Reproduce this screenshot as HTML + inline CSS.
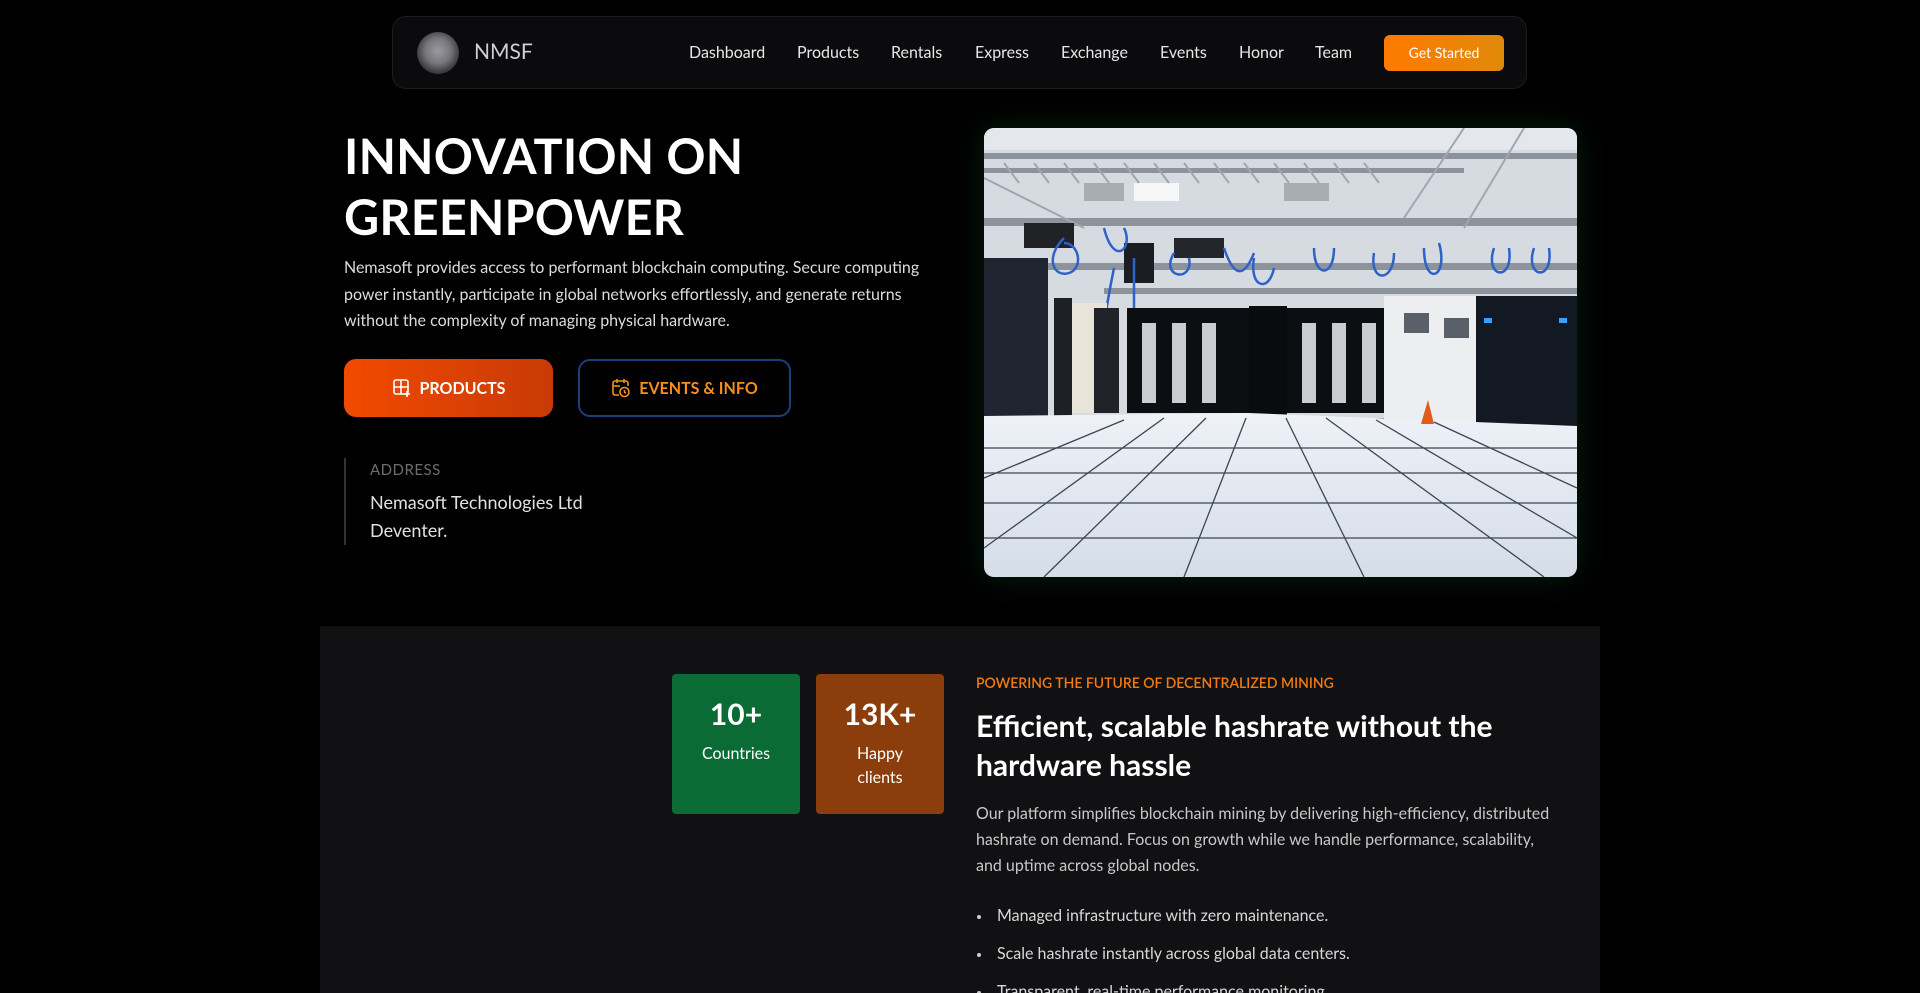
<!DOCTYPE html>
<html><head><meta charset="utf-8"><style>
*{box-sizing:border-box;margin:0;padding:0}
html{width:1920px;height:993px;overflow:hidden;background:#000}
body{width:1920px;height:993px;overflow:hidden;background:#000;font-family:"Lato","Liberation Sans",sans-serif;color:#fff;position:relative}
.nav{position:absolute;left:392px;top:16px;width:1135px;height:73px;background:#0b0b0d;border:1px solid #1d1d20;border-radius:14px}
.logo{position:absolute;left:24px;top:15px;width:42px;height:42px;border-radius:50%;background:radial-gradient(circle at 50% 45%,#9a9aa0 0,#77777d 40%,#3a3a3e 70%,#2a2a2d 100%)}
.brand{position:absolute;left:81px;top:22px;font-size:21px;color:#cfcfd2}
.links{position:absolute;left:296px;top:26px;font-size:16px;color:#e6e6e6;white-space:nowrap}
.links span{position:absolute}
.gs{position:absolute;left:991px;top:18px;width:120px;height:36px;border-radius:6px;background:linear-gradient(90deg,#ff7a00,#e08a0a);font-size:14px;text-align:center;line-height:36px;color:#fff}
h1{position:absolute;left:344px;top:126px;font-size:48.5px;line-height:61px;font-weight:700;letter-spacing:0.2px}
.lead{position:absolute;left:344px;top:255px;width:600px;font-size:16px;line-height:26.5px;color:#dcdcdc}
.btn{position:absolute;top:359px;height:58px;border-radius:12px;font-weight:700;font-size:16px;display:flex;align-items:center;justify-content:center;gap:8px}
.b1{left:344px;width:209px;background:linear-gradient(90deg,#f24a00,#c83a06);color:#fff}
.b2{left:578px;width:213px;border:2px solid #1d3f7a;color:#f4901e}
.addr{position:absolute;left:344px;top:458px;height:87px;border-left:2px solid #333;padding-left:24px}
.addr .l{font-size:15px;color:#6d6d6d;letter-spacing:.5px;margin-top:3px}
.addr .v{font-size:18px;line-height:28px;color:#e0e0e0;margin-top:9px}
.img{position:absolute;left:984px;top:128px;width:593px;height:449px;border-radius:10px;overflow:hidden;box-shadow:0 0 30px rgba(20,90,40,.35)}
.sec{position:absolute;left:320px;top:626px;width:1280px;height:367px;background:#111113}
.card{position:absolute;top:48px;width:128px;height:140px;border-radius:4px;text-align:center}
.card b{display:block;font-size:30px;margin-top:22px;font-weight:700}
.card p{font-size:16px;line-height:24px;margin-top:10px}
.eb{position:absolute;left:656px;top:48px;font-size:14px;color:#f07a14;font-weight:600}
h2{position:absolute;left:656px;top:81px;font-size:30px;line-height:39px;font-weight:700;width:560px}
.p2{position:absolute;left:656px;top:175px;width:580px;font-size:16px;line-height:26px;color:#c8c8c8}
ul{position:absolute;left:677px;top:280px;font-size:16px;color:#d8d8d8;list-style:none}
li{height:38px;position:relative;padding-left:0}
li:before{content:"";position:absolute;left:-20px;top:9px;width:4px;height:4px;border-radius:50%;background:#ccc}
</style></head><body>
<div class="nav"><div class="logo"></div><div class="brand">NMSF</div>
<div class="links"><span style="left:0">Dashboard</span><span style="left:108px">Products</span><span style="left:202px">Rentals</span><span style="left:286px">Express</span><span style="left:372px">Exchange</span><span style="left:471px">Events</span><span style="left:550px">Honor</span><span style="left:626px">Team</span></div>
<div class="gs">Get Started</div></div>
<h1>INNOVATION ON<br>GREENPOWER</h1>
<div class="lead">Nemasoft provides access to performant blockchain computing. Secure computing power instantly, participate in global networks effortlessly, and generate returns without the complexity of managing physical hardware.</div>
<div class="btn b1"><svg width="20" height="20" viewBox="0 0 20 20" fill="none" stroke="#fff" stroke-width="1.6"><rect x="2" y="2" width="14" height="14" rx="2"/><path d="M9 2v14M2 9h14M15 13v6M12 16h6"/></svg>PRODUCTS</div>
<div class="btn b2"><svg width="20" height="20" viewBox="0 0 20 20" fill="none" stroke="#f4901e" stroke-width="1.6"><path d="M8 17H4a2 2 0 0 1-2-2V5a2 2 0 0 1 2-2h11a2 2 0 0 1 2 2v3M6 1v4M13 1v4M2 8h7"/><circle cx="13.5" cy="14" r="4.5"/><path d="M13.5 12v2.2l1.5 1"/></svg>EVENTS &amp; INFO</div>
<div class="addr"><div class="l">ADDRESS</div><div class="v">Nemasoft Technologies Ltd<br>Deventer.</div></div>
<div class="img"><svg width="593" height="449" viewBox="0 0 593 449" preserveAspectRatio="none">
<defs><linearGradient id="fl" x1="0" y1="0" x2="0" y2="1"><stop offset="0" stop-color="#eef2f7"/><stop offset="1" stop-color="#d5dde9"/></linearGradient></defs>
<rect width="593" height="290" fill="#d6dbe2"/>
<rect x="0" y="0" width="593" height="22" fill="#e4e7eb"/>
<rect x="150" y="55" width="45" height="18" fill="#f4f6f8"/><rect x="100" y="55" width="40" height="18" fill="#a9adb3"/><rect x="300" y="55" width="45" height="18" fill="#a9adb3"/>
<g fill="#8c939b"><rect x="0" y="25" width="593" height="6"/><rect x="0" y="40" width="480" height="5"/><rect x="0" y="90" width="593" height="8"/><rect x="60" y="135" width="533" height="7"/><rect x="120" y="160" width="473" height="6"/></g>
<g stroke="#a1a7ae" stroke-width="2"><path d="M0 50L100 100M20 35l15 20M50 35l15 20M80 35l15 20M110 35l15 20M140 35l15 20M170 35l15 20M200 35l15 20M230 35l15 20M260 35l15 20M290 35l15 20M320 35l15 20M350 35l15 20M380 35l15 20M480 0L420 90M540 0L480 100"/></g>
<rect x="40" y="95" width="50" height="25" fill="#202226"/><rect x="140" y="115" width="30" height="40" fill="#1b1d22"/><rect x="190" y="110" width="50" height="20" fill="#23262b"/>
<g stroke="#2f62c8" stroke-width="2.5" fill="none"><path d="M80 110c-20 20-10 40 5 35s10-30-5-30M120 100c10 40 30 20 20 0M190 125c-15 25 20 30 15 5M240 120c10 30 20 30 30 5M270 130c-5 30 15 35 20 10M330 120c0 30 20 30 20 0M390 125c-5 30 20 30 20 0M440 120c0 40 25 30 15-5M510 120c-10 30 20 35 15 0M550 120c-10 30 20 35 15 0M130 140c-10 50 -15 80 -5 120M150 130v110"/></g>
<rect x="0" y="130" width="64" height="160" fill="#1f2530"/><rect x="70" y="170" width="18" height="118" fill="#1d2027"/><rect x="88" y="175" width="35" height="110" fill="#e9e4d8"/><rect x="110" y="180" width="25" height="105" fill="#20232a"/>
<rect x="143" y="180" width="257" height="105" fill="#0c0e12"/>
<g fill="#c9ccd2"><rect x="158" y="195" width="14" height="80"/><rect x="188" y="195" width="14" height="80"/><rect x="218" y="195" width="14" height="80"/><rect x="318" y="195" width="14" height="80"/><rect x="348" y="195" width="14" height="80"/><rect x="378" y="195" width="14" height="80"/></g>
<rect x="265" y="178" width="38" height="112" fill="#0a0b0e"/>
<rect x="400" y="168" width="92" height="128" fill="#eceef0"/><rect x="420" y="185" width="25" height="20" fill="#5a6069"/><rect x="460" y="190" width="25" height="20" fill="#5a6069"/>
<rect x="492" y="168" width="101" height="130" fill="#131922"/><rect x="500" y="190" width="8" height="5" fill="#3aa0ff"/><rect x="575" y="190" width="8" height="5" fill="#3aa0ff"/>
<path d="M0 288L265 285L593 298V449H0Z" fill="url(#fl)"/>
<polygon points="437,296 450,296 444,272" fill="#e45a1a"/>
<g stroke="#3d4653" stroke-width="1.3" fill="none"><path d="M262 290L200 449M302 290L380 449M222 290L60 449M342 290L560 449M180 290L0 420M392 292L593 410M140 292L0 350M450 294L593 360"/>
<path d="M0 320H593M0 345H593M0 375H593M0 410H593"/></g>
</svg></div>
<div class="sec">
<div class="card" style="left:352px;background:#0b6b35"><b>10+</b><p>Countries</p></div>
<div class="card" style="left:496px;background:#8b3e0b"><b>13K+</b><p>Happy<br>clients</p></div>
<div class="eb">POWERING THE FUTURE OF DECENTRALIZED MINING</div>
<h2>Efficient, scalable hashrate without the hardware hassle</h2>
<div class="p2">Our platform simplifies blockchain mining by delivering high-efficiency, distributed hashrate on demand. Focus on growth while we handle performance, scalability, and uptime across global nodes.</div>
<ul><li>Managed infrastructure with zero maintenance.</li><li>Scale hashrate instantly across global data centers.</li><li>Transparent, real-time performance monitoring.</li></ul>
</div>
</body></html>
